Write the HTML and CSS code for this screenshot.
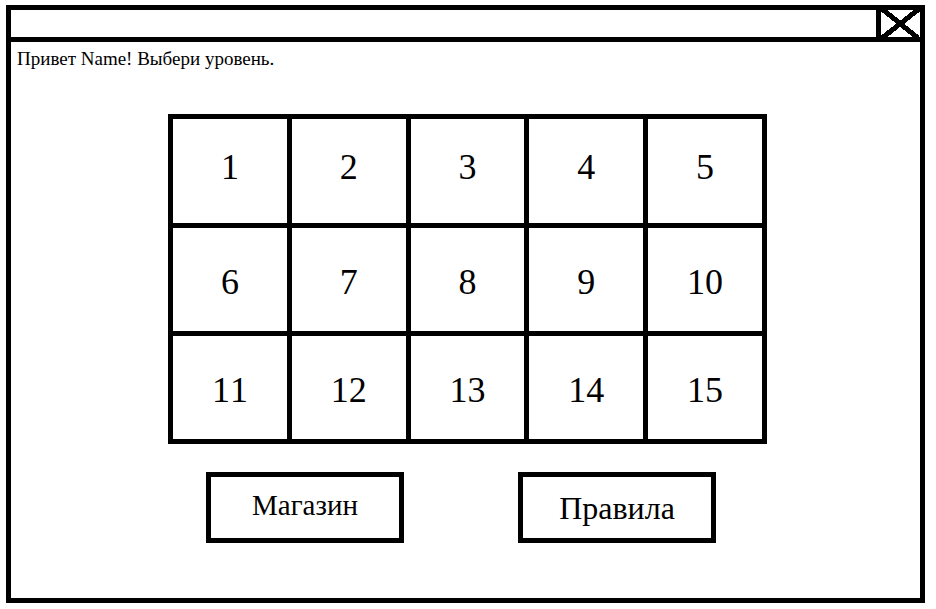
FILE: index.html
```html
<!DOCTYPE html>
<html lang="ru">
<head>
  <meta charset="utf-8">
  <meta name="viewport" content="width=device-width, initial-scale=1">
  <title>Выбор уровня</title>
  <link rel="stylesheet" href="styles.css">
</head>
<body>
  <div class="window">
    <header class="titlebar">
      <button class="close" type="button" aria-label="Закрыть">
        <svg viewBox="0 0 39 27" aria-hidden="true">
          <path d="M1 -1L37 28M38 -1L1 28"/>
        </svg>
      </button>
    </header>
    <main class="content">
      <p class="greeting">Привет Name! Выбери уровень.</p>
      <div class="menu">
        <div class="levels">
          <div class="row row-top">
            <button class="level" type="button">1</button>
            <button class="level" type="button">2</button>
            <button class="level" type="button">3</button>
            <button class="level" type="button">4</button>
            <button class="level" type="button">5</button>
          </div>
          <div class="row">
            <button class="level" type="button">6</button>
            <button class="level" type="button">7</button>
            <button class="level" type="button">8</button>
            <button class="level" type="button">9</button>
            <button class="level" type="button">10</button>
          </div>
          <div class="row">
            <button class="level" type="button">11</button>
            <button class="level" type="button">12</button>
            <button class="level" type="button">13</button>
            <button class="level" type="button">14</button>
            <button class="level" type="button">15</button>
          </div>
        </div>
        <nav class="actions">
          <button class="action shop" type="button">Магазин</button>
          <button class="action rules" type="button">Правила</button>
        </nav>
      </div>
    </main>
  </div>
</body>
</html>
```
FILE: styles.css
```css
* {
  box-sizing: border-box;
}

body {
  margin: 0;
  padding: 5px 11px 6px 6px;
  min-height: 100vh;
  display: flex;
  background: #fff;
  color: #000;
  font-family: "Liberation Serif", "Times New Roman", serif;
}

button {
  margin: 0;
  padding: 0;
  border: 0;
  border-radius: 0;
  background: #fff;
  color: inherit;
  font: inherit;
  cursor: pointer;
}

.window {
  flex: 1;
  display: flex;
  flex-direction: column;
  border: 5px solid #000;
}

.titlebar {
  display: flex;
  justify-content: flex-end;
  border-bottom: 5px solid #000;
}

.close {
  display: flex;
  border-left: 5px solid #000;
}

.close svg {
  width: 39px;
  height: 27px;
  fill: none;
  stroke: #000;
  stroke-width: 5;
  shape-rendering: crispEdges;
}

.content {
  flex: 1;
  padding: 6px 2px 24px 6px;
}

.greeting {
  margin: 0;
  font-size: 19px;
  line-height: 22px;
}

.menu {
  max-width: 599px;
  margin: 44px auto 0;
}

.levels {
  display: grid;
  gap: 5px;
  border: 5px solid #000;
  background: #000;
}

.row {
  display: grid;
  grid-template-columns: repeat(5, 1fr);
  gap: 5px;
}

.level {
  height: 103px;
  padding-top: 4px;
  font-size: 36px;
  font-kerning: none;
  line-height: 40px;
}

.row-top .level {
  height: 104px;
  padding: 0 0 8px;
}

.actions {
  display: flex;
  justify-content: space-between;
  gap: 20px;
  margin-top: 28px;
  padding: 0 51px 0 38px;
}

.action {
  flex: 0 1 198px;
  height: 71px;
  border: 5px solid #000;
  line-height: 36px;
}

.shop {
  padding-bottom: 6px;
  font-size: 29px;
}

.rules {
  font-size: 32px;
}
```
